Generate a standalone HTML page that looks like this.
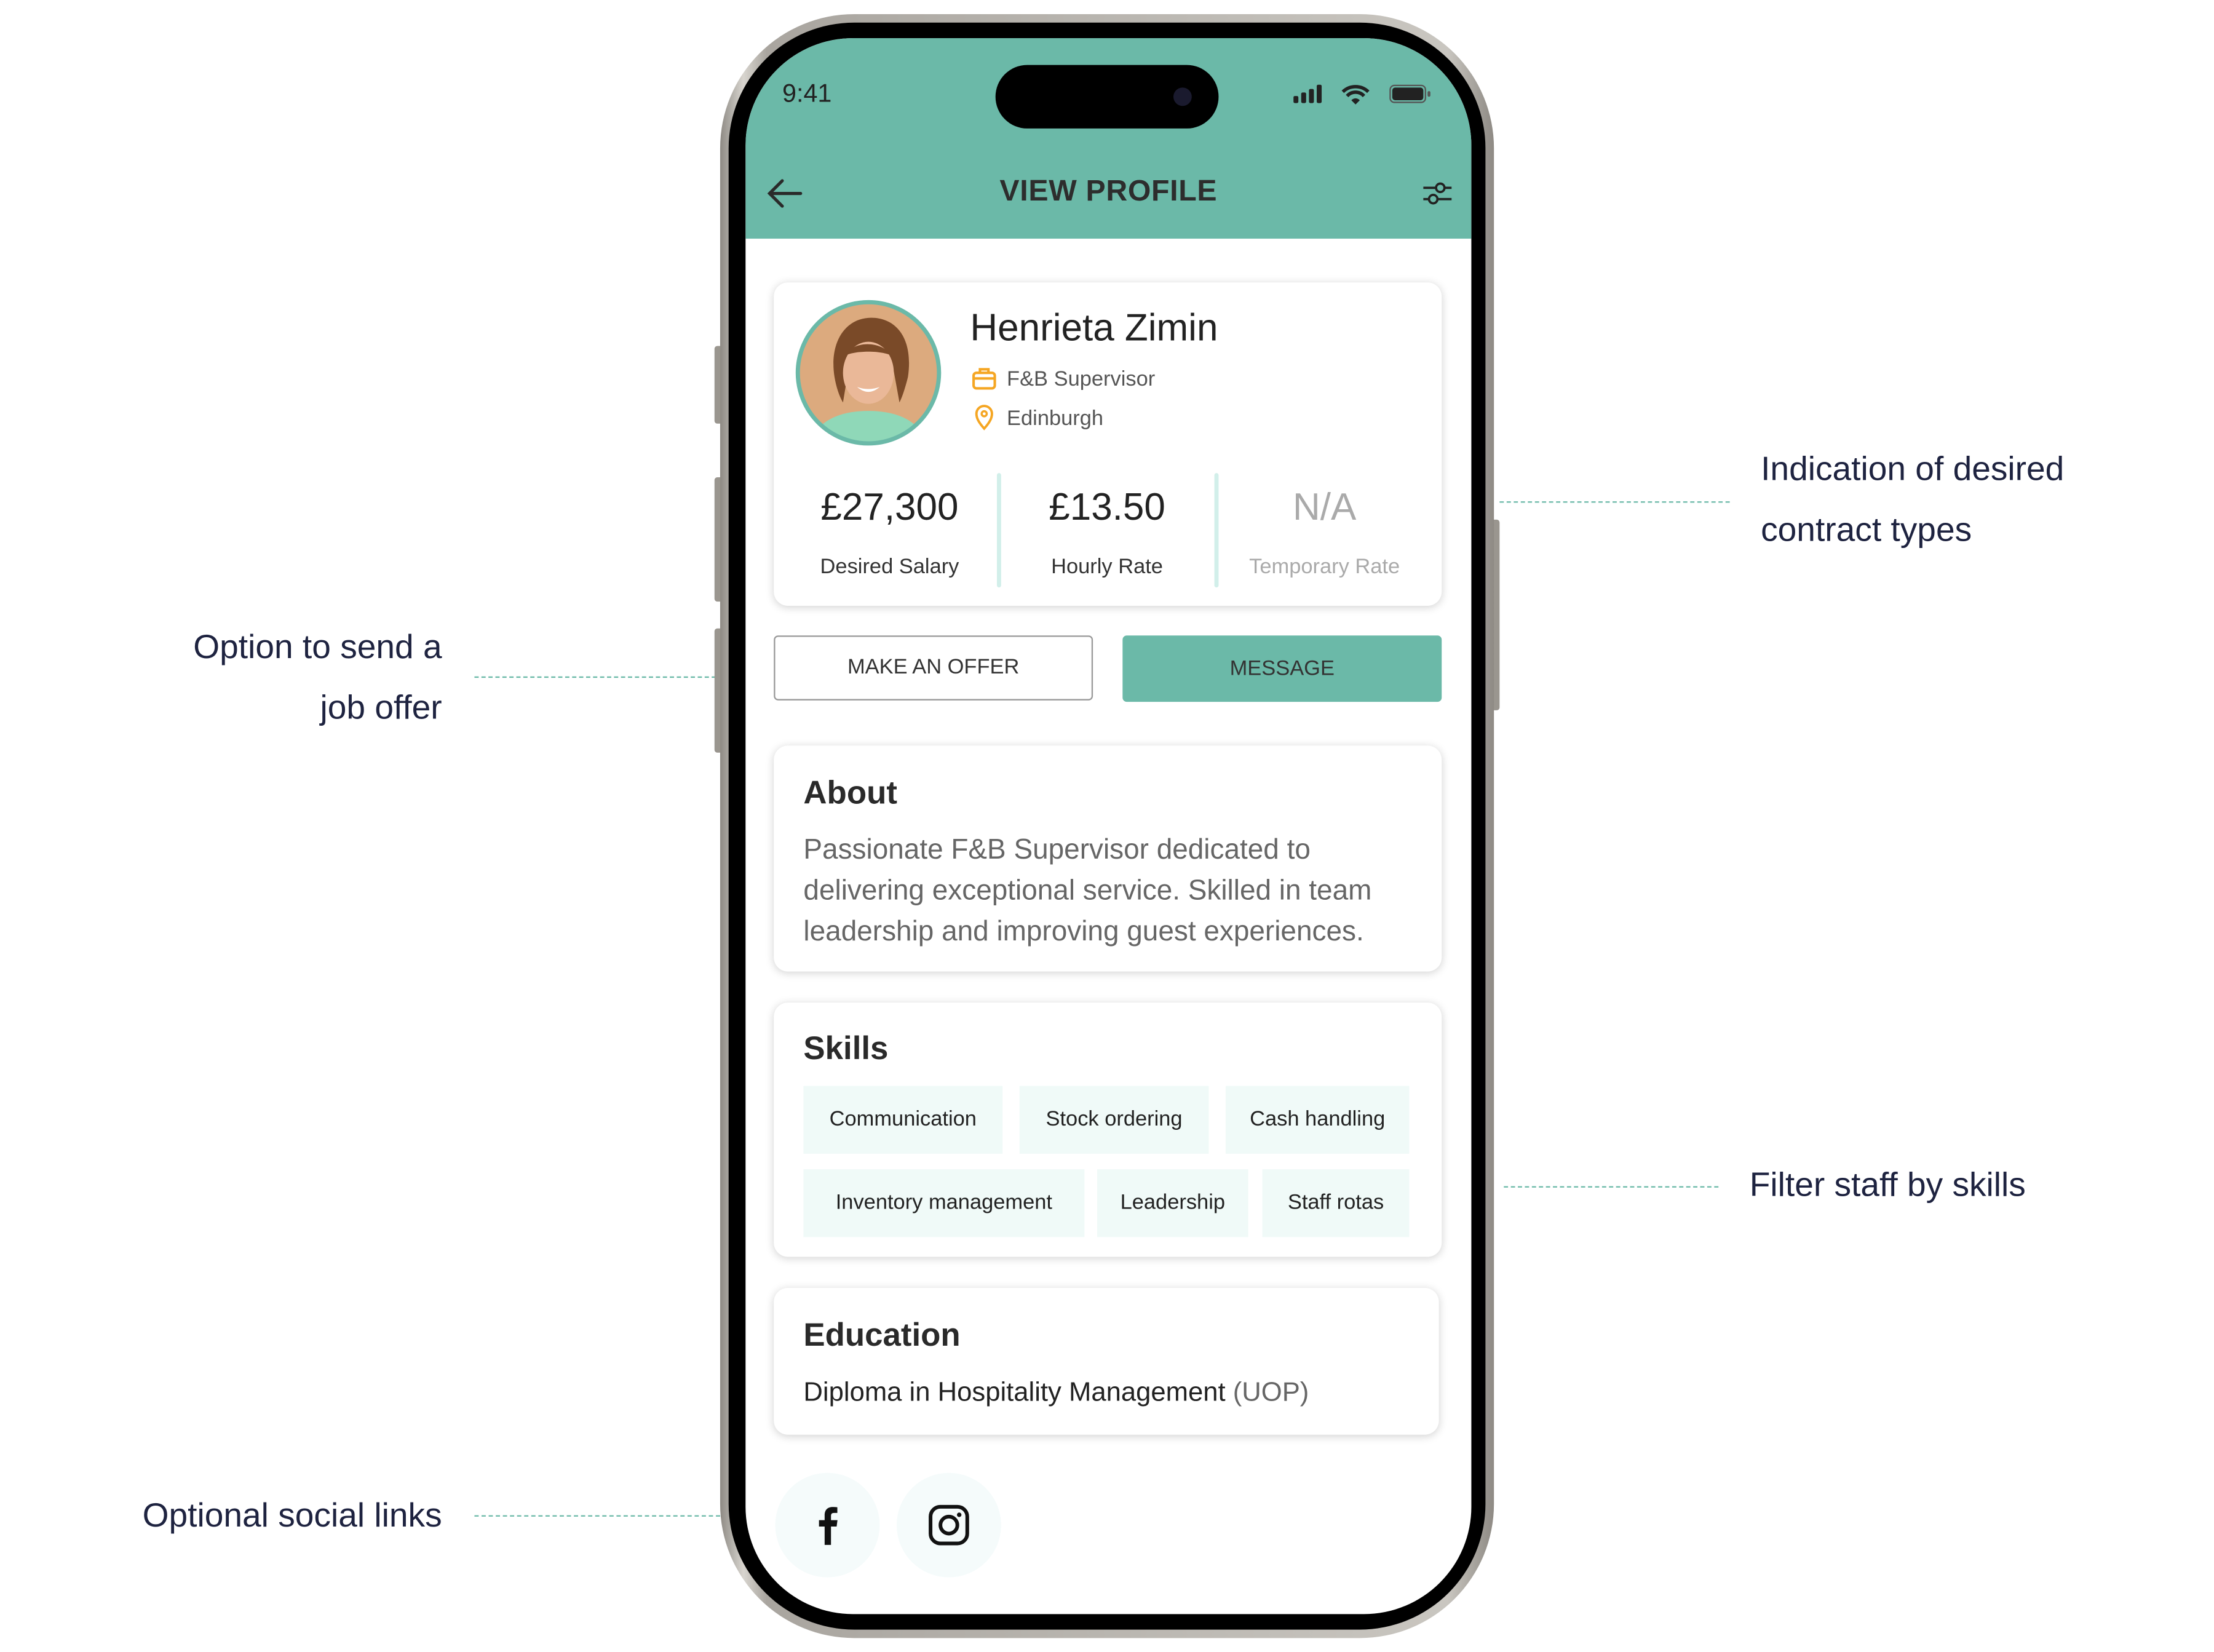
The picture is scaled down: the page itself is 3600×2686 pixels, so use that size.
<!DOCTYPE html>
<html><head><meta charset="utf-8"><style>
html,body{margin:0;padding:0;background:#fff;width:3600px;height:2685px;overflow:hidden}
#w{position:absolute;left:0;top:0;width:1568px;height:1170px;transform:scale(2.296,2.296);transform-origin:0 0;font-family:"Liberation Sans",sans-serif}
.a{position:absolute}
.ann{position:absolute;color:#1e2340;font-size:24px;line-height:43px}
.dash{position:absolute;height:0;border-top:1.5px dashed #6bb9a8}
.card{position:absolute;background:#fff;border-radius:10px;box-shadow:0 1px 6px rgba(0,0,0,.18)}
.t{position:absolute;white-space:nowrap}
.chip{position:absolute;background:#f0faf8;height:48px;line-height:48px;text-align:center;font-size:15px;color:#222}
</style></head><body><div id="w">
<div class="ann" style="right:1255px;top:437px;text-align:right">Option to send a<br>job offer</div>
<div class="dash" style="left:336px;top:479px;width:171px"></div>
<div class="ann" style="left:1247px;top:311px">Indication of desired<br>contract types</div>
<div class="dash" style="left:1062px;top:355px;width:163px"></div>
<div class="ann" style="left:1239px;top:818px">Filter staff by skills</div>
<div class="dash" style="left:1065px;top:840px;width:152px"></div>
<div class="ann" style="right:1255px;top:1052px;text-align:right">Optional social links</div>
<div class="dash" style="left:336px;top:1073px;width:174px"></div>

<div class="a" style="left:506px;top:245px;width:6px;height:55px;background:#9a968f;border-radius:2px"></div>
<div class="a" style="left:506px;top:338px;width:6px;height:88px;background:#9a968f;border-radius:2px"></div>
<div class="a" style="left:506px;top:445px;width:6px;height:88px;background:#9a968f;border-radius:2px"></div>
<div class="a" style="left:1056px;top:368px;width:6px;height:135px;background:#9a968f;border-radius:2px"></div>
<div class="a" style="left:510px;top:10px;width:548px;height:1150px;border-radius:95px;background:linear-gradient(90deg,#8e8a84,#d8d5cf 3%,#a9a59f 6%,#c9c6c0 94%,#8e8a84);"></div>
<div class="a" style="left:516px;top:16px;width:536px;height:1138px;border-radius:89px;background:#000"></div>
<div class="a" style="left:528px;top:27px;width:514px;height:1116px;border-radius:76px;background:#fff;overflow:hidden">
  <div class="a" style="left:0;top:0;width:514px;height:142px;background:#6bb9a8"></div>
  <div class="t" style="left:26px;top:29px;font-size:18px;color:#222">9:41</div>
  <div class="a" style="left:177px;top:19px;width:158px;height:45px;border-radius:23px;background:#000"></div>
  <div class="a" style="left:303px;top:35px;width:13px;height:13px;border-radius:50%;background:#1a1a2e"></div>
  <svg class="a" style="left:388px;top:30px" width="100" height="20" viewBox="0 0 100 20">
    <rect x="0" y="11" width="3.5" height="5" rx="1" fill="#222"/><rect x="5.5" y="8.5" width="3.5" height="7.5" rx="1" fill="#222"/><rect x="11" y="6" width="3.5" height="10" rx="1" fill="#222"/><rect x="16.5" y="3" width="3.5" height="13" rx="1" fill="#222"/>
    <path d="M35 8a13 13 0 0 1 18 0M38 11a8 8 0 0 1 12 0" stroke="#222" stroke-width="2.4" fill="none"/><path d="M41 14l3 3 3-3a4 4 0 0 0-6 0z" fill="#222"/>
    <rect x="68.5" y="3.5" width="25" height="12" rx="3" fill="none" stroke="#555" stroke-width="1"/><rect x="70" y="5" width="22" height="9" rx="2" fill="#222"/><rect x="95" y="7.5" width="2" height="4" rx="1" fill="#555"/>
  </svg>
  <svg class="a" style="left:14px;top:98px" width="28" height="24" viewBox="0 0 28 24"><path d="M25 12H3M12 3L3 12l9 9" stroke="#2a2a2a" stroke-width="2.2" fill="none" stroke-linecap="round"/></svg>
  <div class="t" style="left:0;width:514px;text-align:center;top:97px;font-size:21px;font-weight:bold;color:#2d2d2d;letter-spacing:.3px">VIEW PROFILE</div>
  <svg class="a" style="left:479px;top:100px" width="22" height="20" viewBox="0 0 22 20"><path d="M1 6h20M1 14h20" stroke="#222" stroke-width="1.6"/><circle cx="13" cy="6" r="3" fill="#6bb9a8" stroke="#222" stroke-width="1.6"/><circle cx="8" cy="14" r="3" fill="#6bb9a8" stroke="#222" stroke-width="1.6"/></svg>
</div>

<div class="card" style="left:548px;top:200px;width:473px;height:229px"></div>
<svg class="a" style="left:563px;top:212px" width="104" height="104" viewBox="0 0 104 104">
  <defs><clipPath id="c"><circle cx="52" cy="52" r="49"/></clipPath></defs>
  <g clip-path="url(#c)"><rect width="104" height="104" fill="#dcaa7e"/>
  <path d="M10 104c5-20 25-25 42-25s37 5 42 25z" fill="#8fd8b8"/>
  <path d="M28 55c-4-25 8-42 26-42s30 15 26 42c-2 8-4 14-6 18l-4-22c-8 2-24 2-32-2l-4 24c-3-5-5-12-6-18z" fill="#7a4a28"/>
  <ellipse cx="52" cy="52" rx="18" ry="22" fill="#eab898"/>
  <path d="M35 40c5-10 25-12 34 0-8-4-26-4-34 0z" fill="#7a4a28"/>
  <path d="M44 62q8 7 16 0q-8 3-16 0z" fill="#fff"/></g>
  <circle cx="52" cy="52" r="50" fill="none" stroke="#6bb9a8" stroke-width="3"/>
</svg>
<div class="t" style="left:687px;top:217px;font-size:27px;color:#222">Henrieta Zimin</div>
<svg class="a" style="left:688px;top:259px" width="18" height="18" viewBox="0 0 18 18"><rect x="1.5" y="5" width="15" height="11" rx="2" fill="none" stroke="#f5a623" stroke-width="1.8"/><path d="M6 5V2.5h6V5M1.5 9h15" stroke="#f5a623" stroke-width="1.8" fill="none"/></svg>
<div class="t" style="left:713px;top:260px;font-size:15px;color:#555">F&amp;B Supervisor</div>
<svg class="a" style="left:690px;top:286px" width="14" height="19" viewBox="0 0 14 19"><path d="M7 17.5C3 13 1.5 10 1.5 7a5.5 5.5 0 0 1 11 0c0 3-1.5 6-5.5 10.5z" fill="none" stroke="#f5a623" stroke-width="1.7"/><circle cx="7" cy="7" r="1.8" fill="none" stroke="#f5a623" stroke-width="1.5"/></svg>
<div class="t" style="left:713px;top:288px;font-size:15px;color:#555">Edinburgh</div>
<div class="a" style="left:706px;top:335px;width:3px;height:81px;background:#d2efea;border-radius:2px"></div>
<div class="a" style="left:860px;top:335px;width:3px;height:81px;background:#d2efea;border-radius:2px"></div>
<div class="t" style="left:553px;width:154px;text-align:center;top:344px;font-size:27px;color:#222">£27,300</div>
<div class="t" style="left:707px;width:154px;text-align:center;top:344px;font-size:27px;color:#222">£13.50</div>
<div class="t" style="left:861px;width:154px;text-align:center;top:344px;font-size:27px;color:#aaa">N/A</div>
<div class="t" style="left:553px;width:154px;text-align:center;top:393px;font-size:15px;color:#333">Desired Salary</div>
<div class="t" style="left:707px;width:154px;text-align:center;top:393px;font-size:15px;color:#333">Hourly Rate</div>
<div class="t" style="left:861px;width:154px;text-align:center;top:393px;font-size:15px;color:#aaa">Temporary Rate</div>

<div class="a" style="left:548px;top:450px;width:224px;height:44px;border:1.5px solid #999;border-radius:3px;text-align:center;line-height:44px;font-size:15px;color:#333">MAKE AN OFFER</div>
<div class="a" style="left:795px;top:450px;width:226px;height:47px;background:#6bb9a8;border-radius:3px;text-align:center;line-height:47px;font-size:15px;color:#333">MESSAGE</div>

<div class="card" style="left:548px;top:528px;width:473px;height:160px"></div>
<div class="t" style="left:569px;top:548px;font-size:23px;font-weight:bold;color:#2a2a2a">About</div>
<div class="a" style="left:569px;top:588px;width:445px;font-size:20px;line-height:29px;color:#666">Passionate F&amp;B Supervisor dedicated to<br>delivering exceptional service. Skilled in team<br>leadership and improving guest experiences.</div>

<div class="card" style="left:548px;top:710px;width:473px;height:180px"></div>
<div class="t" style="left:569px;top:729px;font-size:23px;font-weight:bold;color:#2a2a2a">Skills</div>
<div class="chip" style="left:569px;top:769px;width:141px">Communication</div>
<div class="chip" style="left:722px;top:769px;width:134px">Stock ordering</div>
<div class="chip" style="left:868px;top:769px;width:130px">Cash handling</div>
<div class="chip" style="left:569px;top:828px;width:199px">Inventory management</div>
<div class="chip" style="left:777px;top:828px;width:107px">Leadership</div>
<div class="chip" style="left:894px;top:828px;width:104px">Staff rotas</div>

<div class="card" style="left:548px;top:912px;width:471px;height:104px"></div>
<div class="t" style="left:569px;top:932px;font-size:23px;font-weight:bold;color:#2a2a2a">Education</div>
<div class="t" style="left:569px;top:976px;font-size:19px;color:#222">Diploma in Hospitality Management <span style="color:#666">(UOP)</span></div>

<div class="a" style="left:549px;top:1043px;width:74px;height:74px;border-radius:50%;background:#f5fbfb"></div>
<div class="a" style="left:635px;top:1043px;width:74px;height:74px;border-radius:50%;background:#f5fbfb"></div>
<svg class="a" style="left:575px;top:1065px" width="22" height="30" viewBox="0 0 22 30"><path d="M13.5 29V16h4l.6-4.5h-4.6V8.6c0-1.3.4-2.2 2.2-2.2H18V2.4c-.5-.1-1.8-.2-3.4-.2-3.4 0-5.6 2-5.6 5.8v3.5H5V16h4v13z" fill="#111"/></svg>
<svg class="a" style="left:657px;top:1065px" width="30" height="30" viewBox="0 0 30 30"><rect x="2" y="2" width="26" height="26" rx="7" fill="none" stroke="#111" stroke-width="2.6"/><circle cx="15" cy="15" r="6" fill="none" stroke="#111" stroke-width="2.6"/><circle cx="22.3" cy="7.7" r="1.6" fill="#111"/></svg>
</div></body></html>
